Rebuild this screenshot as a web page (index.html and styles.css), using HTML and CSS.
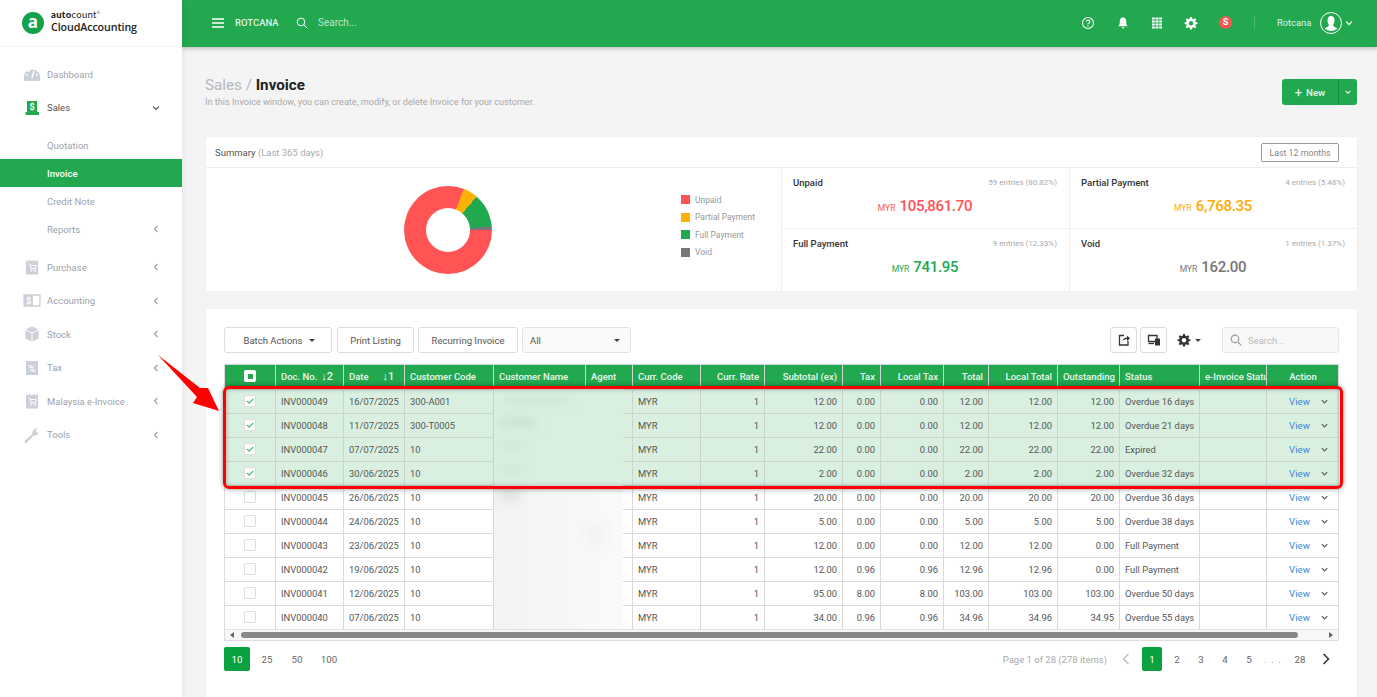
FILE: index.html
```html
<!DOCTYPE html>
<html lang="en">
<head>
<meta charset="utf-8">
<title>Sales / Invoice</title>
<link rel="stylesheet" href="styles.css">
</head>
<body>
<svg class="sprite" width="0" height="0" aria-hidden="true">
  <symbol id="down" viewBox="0 0 10 10"><path d="M2 3.5 5 6.5 8 3.5" fill="none" stroke="currentColor" stroke-width="1.3"/></symbol>
  <symbol id="left" viewBox="0 0 10 10"><path d="M6.5 2 3.5 5 6.5 8" fill="none" stroke="currentColor" stroke-width="1.2"/></symbol>
  <symbol id="tick" viewBox="0 0 12 12"><path d="M2.5 6.2 5 8.5 9.8 3.8" fill="none" stroke="#22a84f" stroke-width="1.3"/></symbol>
  <symbol id="cart" viewBox="0 0 18 18"><path d="M3 2 5 3.500 7 2 9 3.500 11 2 13 3.500 15 2V16.500H3Z" fill="currentColor"/><path d="M5.500 6H7L8 10.500H12.500L13 7.500H7.500" fill="none" stroke="#fff" stroke-width="1"/><circle cx="8.500" cy="12.500" r="1" fill="#fff"/><circle cx="12" cy="12.500" r="1" fill="#fff"/></symbol>
</svg>
<div class="app">
  <aside class="sidebar">
    <div class="brand">
      <span class="brand-mark">a</span>
      <div class="brand-text">
        <div class="brand-top"><b>auto</b>count<sup>®</sup></div>
        <div class="brand-name">CloudAccounting</div>
      </div>
    </div>
    <nav class="nav">
      <a class="nav-item"><svg class="nav-icon" viewBox="0 0 18 18"><path d="M1 14.500A8.200 8.200 0 1 1 17 14.500 1.500 1.500 0 0 1 15.500 16H2.500A1.500 1.500 0 0 1 1 14.500Z" fill="currentColor"/><path d="M9 13 11 6" stroke="#fff" stroke-width="1.500"/><circle cx="4" cy="10" r="1" fill="#fff"/><circle cx="6" cy="6" r="1" fill="#fff"/><circle cx="14" cy="10" r="1" fill="#fff"/></svg><span class="nav-label">Dashboard</span></a>
      <a class="nav-item nav-open"><svg class="nav-icon nav-icon-green" viewBox="0 0 18 18"><path d="M4 2H14V14H4Z" fill="currentColor"/><path d="M2.500 13H16V16H2.500Z" fill="currentColor"/><text x="9" y="11" class="icon-dollar">$</text></svg><span class="nav-label">Sales</span><svg class="nav-arrow"><use href="#down"/></svg></a>
      <div class="subnav">
        <a class="sub-item">Quotation</a>
        <a class="sub-item sub-active">Invoice</a>
        <a class="sub-item">Credit Note</a>
        <a class="sub-item">Reports<svg class="nav-arrow"><use href="#left"/></svg></a>
      </div>
      <a class="nav-item"><svg class="nav-icon"><use href="#cart"/></svg><span class="nav-label">Purchase</span><svg class="nav-arrow"><use href="#left"/></svg></a>
      <a class="nav-item"><svg class="nav-icon" viewBox="0 0 18 18"><path d="M1 3H17V14H1Z" fill="none" stroke="currentColor" stroke-width="1.300"/><path d="M1 3H10V14H1Z" fill="currentColor"/><text x="5.500" y="11.500" class="icon-dollar">$</text></svg><span class="nav-label">Accounting</span><svg class="nav-arrow"><use href="#left"/></svg></a>
      <a class="nav-item"><svg class="nav-icon" viewBox="0 0 18 18"><path d="M9 1.500 15.500 4.500 9 7.500 2.500 4.500Z" fill="currentColor"/><path d="M2.500 5.500 8.500 8.500V16.500L2.500 13.500Z" fill="currentColor"/><path d="M15.500 5.500 9.500 8.500V16.500L15.500 13.500Z" fill="currentColor"/></svg><span class="nav-label">Stock</span><svg class="nav-arrow"><use href="#left"/></svg></a>
      <a class="nav-item"><svg class="nav-icon" viewBox="0 0 18 18"><path d="M3 2H15V16H3Z" fill="currentColor"/><text x="9" y="12.500" class="icon-dollar">%</text></svg><span class="nav-label">Tax</span><svg class="nav-arrow"><use href="#left"/></svg></a>
      <a class="nav-item"><svg class="nav-icon"><use href="#cart"/></svg><span class="nav-label">Malaysia e-Invoice</span><svg class="nav-arrow"><use href="#left"/></svg></a>
      <a class="nav-item"><svg class="nav-icon" viewBox="0 0 18 18"><path d="M2 14.500 9.500 8A4.500 4.500 0 0 1 15 2.500L12.500 5 13.500 6.500 15.500 7A4.500 4.500 0 0 1 10.500 9.500L4 16.500A1.400 1.400 0 0 1 2 14.500Z" fill="currentColor"/></svg><span class="nav-label">Tools</span><svg class="nav-arrow"><use href="#left"/></svg></a>
    </nav>
  </aside>

  <div class="main">
    <header class="topbar">
      <svg class="top-menu" viewBox="0 0 14 12"><path d="M1 2H13M1 6H13M1 10H13" stroke="#fff" stroke-width="1.300"/></svg>
      <span class="top-org">ROTCANA</span>
      <svg class="top-search" viewBox="0 0 12 12"><circle cx="5" cy="5" r="3.800" fill="none" stroke="#fff" stroke-width="1"/><path d="M8 8 11.300 11.300" stroke="#fff" stroke-width="1"/></svg>
      <span class="top-placeholder">Search...</span>
      <div class="top-right">
        <svg class="top-icon top-help" viewBox="0 0 14 14"><circle cx="7" cy="7" r="5.500" fill="none" stroke="#fff" stroke-width="1.100"/><path d="M5.300 5.500A1.800 1.800 0 1 1 7 7.700V8.500" fill="none" stroke="#fff" stroke-width="1.100"/><circle cx="7" cy="10" r=".7" fill="#fff"/></svg>
        <svg class="top-icon" viewBox="0 0 14 14"><path d="M7 1.500C4.500 1.500 3.800 3.500 3.800 5.500 3.800 8 3.300 9.200 2.300 10.300H11.700C10.700 9.200 10.200 8 10.200 5.500 10.200 3.500 9.500 1.500 7 1.500Z" fill="#fff"/><path d="M5.700 11.300H8.300A1.300 1.300 0 0 1 5.700 11.300Z" fill="#fff"/></svg>
        <svg class="top-icon" viewBox="0 0 14 14"><path d="M2 2.500H12M2 5.500H12M2 8.500H12M2 11.500H12" stroke="#fff" stroke-width="2"/><path d="M5.200 1V13M8.800 1V13" stroke="#22a84f" stroke-width=".7"/></svg>
        <svg class="top-icon top-gear" viewBox="0 0 14 14"><path d="M6 1H8L8.300 2.700 9.600 3.200 11 2.200 12.300 3.600 11.300 5 11.800 6.200 13.500 6.500V8L11.800 8.300 11.300 9.600 12.300 11 11 12.300 9.600 11.300 8.300 11.800 8 13.500H6L5.700 11.800 4.400 11.300 3 12.300 1.700 11 2.700 9.600 2.200 8.300.5 8V6.500L2.200 6.200 2.700 5 1.700 3.600 3 2.200 4.400 3.200 5.700 2.700Z" fill="#fff"/><circle cx="7" cy="7.200" r="2.200" fill="#22a84f"/></svg>
        <span class="top-badge">S</span>
        <span class="top-divider"></span>
        <span class="top-user">Rotcana</span>
        <svg class="top-avatar" viewBox="0 0 22 22"><circle cx="11" cy="11" r="10.500" fill="#22a84f" stroke="#fff"/><path d="M11 4C8.500 4 7.500 6 7.500 8.500 7.500 10.500 8.500 12 9 13 9 14.500 6 15.500 4.500 16.500A10 10 0 0 0 17.500 16.500C16 15.500 13 14.500 13 13 13.500 12 14.500 10.500 14.500 8.500 14.500 6 13.500 4 11 4Z" fill="#fff"/></svg>
        <svg class="top-caret"><use href="#down"/></svg>
      </div>
    </header>

    <div class="content">
      <div class="page-head">
        <div>
          <h1 class="page-title"><span class="crumb">Sales / </span>Invoice</h1>
          <p class="page-sub">In this Invoice window, you can create, modify, or delete Invoice for your customer.</p>
        </div>
        <div class="new-group">
          <button class="new-btn"><span class="new-plus">+</span>New</button>
          <button class="new-drop"><svg class="new-caret"><use href="#down"/></svg></button>
        </div>
      </div>

      <section class="card summary">
        <div class="summary-head">
          <span class="summary-title">Summary <span class="muted">(Last 365 days)</span></span>
          <button class="range-btn">Last 12 months</button>
        </div>
        <div class="summary-body">
          <div class="chart-area">
            <div class="donut"></div>
            <ul class="legend">
              <li><i class="sw sw-red"></i>Unpaid</li>
              <li><i class="sw sw-amber"></i>Partial Payment</li>
              <li><i class="sw sw-green"></i>Full Payment</li>
              <li><i class="sw sw-gray"></i>Void</li>
            </ul>
          </div>
          <div class="stats">
            <div class="stat"><div class="stat-top"><b>Unpaid</b><span>59 entries (80.82%)</span></div><div class="stat-val val-red"><small>MYR</small>105,861.70</div></div>
            <div class="stat"><div class="stat-top"><b>Partial Payment</b><span>4 entries (5.48%)</span></div><div class="stat-val val-amber"><small>MYR</small>6,768.35</div></div>
            <div class="stat"><div class="stat-top"><b>Full Payment</b><span>9 entries (12.33%)</span></div><div class="stat-val val-green"><small>MYR</small>741.95</div></div>
            <div class="stat"><div class="stat-top"><b>Void</b><span>1 entries (1.37%)</span></div><div class="stat-val val-gray"><small>MYR</small>162.00</div></div>
          </div>
        </div>
      </section>

      <section class="card list">
        <div class="toolbar">
          <button class="btn btn-batch">Batch Actions<i class="tri"></i></button>
          <button class="btn btn-print">Print Listing</button>
          <button class="btn btn-rec">Recurring Invoice</button>
          <div class="select">All<i class="tri"></i></div>
          <div class="tool-right">
            <button class="btn btn-icon"><svg viewBox="0 0 14 14" class="tool-svg"><path d="M7 2.500H2.500V12H11V8" fill="none" stroke="#333" stroke-width="1.300"/><path d="M5.500 8C6 5.500 8 4.500 10 4.500V2.500L13 5.500 10 8V6.200C8 6.200 6.500 6.800 5.500 8Z" fill="#333"/></svg></button>
            <button class="btn btn-icon"><svg viewBox="0 0 14 14" class="tool-svg"><path d="M1.500 2.500H10V8.500H1.500Z" fill="none" stroke="#333" stroke-width="1.300"/><path d="M1.500 10.500H7" stroke="#333" stroke-width="1.300"/><path d="M8 5.500H13V12.500H8Z" fill="#333"/></svg></button>
            <div class="gear-menu"><svg viewBox="0 0 14 14" class="tool-svg"><path d="M6 1H8L8.300 2.700 9.600 3.200 11 2.200 12.300 3.600 11.300 5 11.800 6.200 13.500 6.500V8L11.800 8.300 11.300 9.600 12.300 11 11 12.300 9.600 11.300 8.300 11.800 8 13.500H6L5.700 11.800 4.400 11.300 3 12.300 1.700 11 2.700 9.600 2.200 8.300.5 8V6.500L2.200 6.200 2.700 5 1.700 3.600 3 2.200 4.400 3.200 5.700 2.700Z" fill="#333"/><circle cx="7" cy="7.200" r="2.200" fill="#fff"/></svg><i class="tri"></i></div>
            <div class="list-search"><svg viewBox="0 0 12 12" class="search-svg"><circle cx="5" cy="5" r="3.800" fill="none" stroke="#999" stroke-width="1.200"/><path d="M8 8 11.300 11.300" stroke="#999" stroke-width="1.200"/></svg>Search...</div>
          </div>
        </div>

        <div class="table-wrap">
          <table class="grid">
            <colgroup>
              <col class="c1"><col class="c2"><col class="c3"><col class="c4"><col class="c5"><col class="c6"><col class="c7"><col class="c8"><col class="c9"><col class="c10"><col class="c11"><col class="c12"><col class="c13"><col class="c14"><col class="c15"><col class="c16"><col class="c17">
            </colgroup>
            <thead>
              <tr>
                <th><span class="chk chk-head"></span></th>
                <th>Doc. No.<span class="sort sort-doc">↓2</span></th>
                <th>Date<span class="sort sort-date">↓1</span></th>
                <th>Customer Code</th><th>Customer Name</th><th>Agent</th><th>Curr. Code</th>
                <th>Curr. Rate</th><th>Subtotal (ex)</th><th>Tax</th><th>Local Tax</th><th>Total</th><th>Local Total</th><th>Outstanding</th>
                <th>Status</th><th>e-Invoice Status</th><th>Action</th>
              </tr>
            </thead>
            <tbody>
              <tr class="sel"><td><span class="chk"><svg><use href="#tick"/></svg></span></td><td>INV000049</td><td>16/07/2025</td><td>300-A001</td><td></td><td></td><td>MYR</td><td>1</td><td>12.00</td><td>0.00</td><td>0.00</td><td>12.00</td><td>12.00</td><td>12.00</td><td>Overdue 16 days</td><td></td><td><div class="act"><a>View</a><svg><use href="#down"/></svg></div></td></tr>
              <tr class="sel"><td><span class="chk"><svg><use href="#tick"/></svg></span></td><td>INV000048</td><td>11/07/2025</td><td>300-T0005</td><td></td><td></td><td>MYR</td><td>1</td><td>12.00</td><td>0.00</td><td>0.00</td><td>12.00</td><td>12.00</td><td>12.00</td><td>Overdue 21 days</td><td></td><td><div class="act"><a>View</a><svg><use href="#down"/></svg></div></td></tr>
              <tr class="sel"><td><span class="chk"><svg><use href="#tick"/></svg></span></td><td>INV000047</td><td>07/07/2025</td><td>10</td><td></td><td></td><td>MYR</td><td>1</td><td>22.00</td><td>0.00</td><td>0.00</td><td>22.00</td><td>22.00</td><td>22.00</td><td>Expired</td><td></td><td><div class="act"><a>View</a><svg><use href="#down"/></svg></div></td></tr>
              <tr class="sel"><td><span class="chk"><svg><use href="#tick"/></svg></span></td><td>INV000046</td><td>30/06/2025</td><td>10</td><td></td><td></td><td>MYR</td><td>1</td><td>2.00</td><td>0.00</td><td>0.00</td><td>2.00</td><td>2.00</td><td>2.00</td><td>Overdue 32 days</td><td></td><td><div class="act"><a>View</a><svg><use href="#down"/></svg></div></td></tr>
              <tr><td><span class="chk"></span></td><td>INV000045</td><td>26/06/2025</td><td>10</td><td></td><td></td><td>MYR</td><td>1</td><td>20.00</td><td>0.00</td><td>0.00</td><td>20.00</td><td>20.00</td><td>20.00</td><td>Overdue 36 days</td><td></td><td><div class="act"><a>View</a><svg><use href="#down"/></svg></div></td></tr>
              <tr><td><span class="chk"></span></td><td>INV000044</td><td>24/06/2025</td><td>10</td><td></td><td></td><td>MYR</td><td>1</td><td>5.00</td><td>0.00</td><td>0.00</td><td>5.00</td><td>5.00</td><td>5.00</td><td>Overdue 38 days</td><td></td><td><div class="act"><a>View</a><svg><use href="#down"/></svg></div></td></tr>
              <tr><td><span class="chk"></span></td><td>INV000043</td><td>23/06/2025</td><td>10</td><td></td><td></td><td>MYR</td><td>1</td><td>12.00</td><td>0.00</td><td>0.00</td><td>12.00</td><td>12.00</td><td>0.00</td><td>Full Payment</td><td></td><td><div class="act"><a>View</a><svg><use href="#down"/></svg></div></td></tr>
              <tr><td><span class="chk"></span></td><td>INV000042</td><td>19/06/2025</td><td>10</td><td></td><td></td><td>MYR</td><td>1</td><td>12.00</td><td>0.96</td><td>0.96</td><td>12.96</td><td>12.96</td><td>0.00</td><td>Full Payment</td><td></td><td><div class="act"><a>View</a><svg><use href="#down"/></svg></div></td></tr>
              <tr><td><span class="chk"></span></td><td>INV000041</td><td>12/06/2025</td><td>10</td><td></td><td></td><td>MYR</td><td>1</td><td>95.00</td><td>8.00</td><td>8.00</td><td>103.00</td><td>103.00</td><td>103.00</td><td>Overdue 50 days</td><td></td><td><div class="act"><a>View</a><svg><use href="#down"/></svg></div></td></tr>
              <tr><td><span class="chk"></span></td><td>INV000040</td><td>07/06/2025</td><td>10</td><td></td><td></td><td>MYR</td><td>1</td><td>34.00</td><td>0.96</td><td>0.96</td><td>34.96</td><td>34.96</td><td>34.95</td><td>Overdue 55 days</td><td></td><td><div class="act"><a>View</a><svg><use href="#down"/></svg></div></td></tr>
            </tbody>
          </table>
          <div class="smear smear-green"><i class="blob b1"></i><i class="blob b2"></i><i class="blob b3"></i><i class="blob b4"></i></div>
          <div class="smear smear-gray"><i class="blob b5"></i><i class="blob b6"></i></div>
          <div class="hscroll"><i class="sa sa-left"></i><div class="thumb"></div><i class="sa sa-right"></i></div>
        </div>

        <div class="pager-row">
          <div class="sizes"><span class="pg pg-on">10</span><span class="size">25</span><span class="size">50</span><span class="size">100</span></div>
          <div class="pager">
            <span class="pg-info">Page 1 of 28 (278 items)</span>
            <svg class="pg-arrow pg-prev" viewBox="0 0 10 14"><path d="M7.500 2 2.500 7 7.500 12" fill="none" stroke="currentColor" stroke-width="1.300"/></svg>
            <span class="pg pg-num">1</span><span class="pn">2</span><span class="pn">3</span><span class="pn">4</span><span class="pn">5</span><span class="pn pn-dots">. . .</span><span class="pn pn-last">28</span>
            <svg class="pg-arrow pg-next" viewBox="0 0 10 14"><path d="M2.500 2 7.500 7 2.500 12" fill="none" stroke="currentColor" stroke-width="1.500"/></svg>
          </div>
        </div>
      </section>
    </div>
  </div>
</div>
<div class="mark-box"></div>
<svg class="mark-arrow" viewBox="0 0 70 64"><polygon points="3,1 45,34 53,34 64,57 38,49 42,43" fill="#f00"/></svg>
</body>
</html>
```
FILE: styles.css
```css
* { box-sizing: border-box; }
html, body { margin: 0; height: 697px; overflow: hidden; }
body { font-family: Roboto, "Liberation Sans", sans-serif; color: #555; background: #f4f4f4; position: relative; }
button { font-family: inherit; cursor: pointer; }
.sprite { position: absolute; }
.app { display: flex; height: 697px; }

/* sidebar */
.sidebar { width: 182px; flex: none; background: #fff; box-shadow: 2px 0 6px rgba(0,0,0,.05); z-index: 1; }
.brand { height: 47px; display: flex; align-items: center; padding-left: 22px; gap: 7px; border-bottom: 1px solid #f5f5f5; }
.brand-mark { width: 22px; height: 22px; border-radius: 50%; background: #12a24a; color: #fff; font: 700 17px/20px "Open Sans", sans-serif; text-align: center; }
.brand-text { padding-bottom: 3px; }
.brand-top { font: 400 9.5px/11px Lato, sans-serif; color: #222; letter-spacing: .3px; }
.brand-top b { font-weight: 900; }
.brand-top sup { font-size: 4px; line-height: 0; }
.brand-name { font: 600 10.7px/14px "Open Sans", sans-serif; color: #222; letter-spacing: -.1px; }
.nav { padding-top: 10.5px; font-size: 9.5px; }
.nav-item { height: 33.5px; display: flex; align-items: center; padding-left: 23px; color: #9ea3aa; }
.nav-icon { width: 18px; height: 18px; flex: none; color: #cbd0d8; margin-right: 6px; }
.nav-icon-green { color: #22a84f; }
.icon-dollar { font: 700 9px Roboto, sans-serif; fill: #fff; text-anchor: middle; }
.nav-label { flex: 1; }
.nav-open { color: #555; }
.nav-arrow { width: 10px; height: 10px; color: #a0a0a0; margin-right: 21px; flex: none; }
.nav-open .nav-arrow { color: #666; }
.subnav { padding: 6.5px 0 7.5px; }
.sub-item { height: 28px; display: flex; align-items: center; padding-left: 47px; color: #9ea3aa; justify-content: space-between; }
.sub-active { background: #22a84f; color: #fff; font-weight: 500; }

/* main */
.main { flex: 1; min-width: 0; }
.topbar { height: 47px; background: #22a84f; color: #fff; display: flex; align-items: center; padding: 0 0 2px 29px; box-shadow: 0 2px 4px rgba(0,0,0,.2); position: relative; }
.top-menu { width: 14px; height: 12px; margin-right: 10px; }
.top-org { font-size: 9.5px; font-weight: 500; color: #dff3e6; width: 61px; }
.top-search { width: 12px; height: 12px; }
.top-placeholder { margin-left: 10px; font-size: 10px; color: #bfe6cc; }
.top-right { margin-left: auto; display: flex; align-items: center; padding-right: 24px; }
.top-icon { width: 14px; height: 14px; margin-right: 20px; }
.top-help { margin-right: 21px; }
.top-gear { margin-right: 21px; }
.top-badge { width: 13px; height: 13px; border-radius: 50%; background: #f5574f; color: #fff; font: 700 9px/13px Roboto, sans-serif; text-align: center; }
.top-divider { width: 1px; height: 12px; background: #4dbb73; margin: 0 22px; }
.top-user { font-size: 9.3px; color: #dff3e6; width: 43px; }
.top-avatar { width: 22px; height: 22px; }
.top-caret { width: 10px; height: 10px; color: #dff3e6; margin-left: 2px; margin-right: -1px; }

.content { padding: 0 20px 0 24px; }
.page-head { display: flex; justify-content: space-between; align-items: flex-start; padding-top: 29px; height: 90px; margin-left: -1px; }
.page-title { margin: 0; font-size: 15.2px; line-height: 19px; font-weight: 700; color: #222; }
.crumb { font-weight: 400; color: #b5b8bd; }
.page-sub { margin: 1px 0 0; font-size: 9.1px; line-height: 13px; color: #aaa; }
.new-group { display: flex; margin-top: 3px; }
.new-btn { width: 57px; height: 26px; background: #22a84f; color: #e8f7ed; border: 0; border-radius: 3px 0 0 3px; font-size: 9.7px; font-weight: 500; border-right: 1px solid #1a8a40; }
.new-plus { font-size: 13px; font-weight: 400; margin-right: 4px; vertical-align: -1px; }
.new-drop { width: 18px; height: 26px; background: #22a84f; border: 0; border-radius: 0 3px 3px 0; padding: 0; display: flex; align-items: center; justify-content: center; }
.new-caret { width: 8px; height: 8px; color: #e8f7ed; }

.card { background: #fff; box-shadow: 0 0 2px rgba(0,0,0,.06); }
.summary { height: 154px; border-radius: 2px; }
.summary-head { height: 31px; display: flex; align-items: center; justify-content: space-between; padding: 1px 18px 0 9px; border-bottom: 1px solid #eee; }
.summary-title { font-size: 9.5px; color: #555; }
.muted { color: #aaa; }
.range-btn { width: 78px; height: 19px; background: #fff; border: 1px solid #999; border-radius: 2px; font-size: 8.8px; color: #888; padding: 0; }
.summary-body { display: flex; height: 123px; }
.chart-area { width: 575px; display: flex; align-items: center; padding-left: 198px; }
.donut { width: 88px; height: 88px; border-radius: 50%; position: relative; background: conic-gradient(from 90deg, #ff5354 0 80.82%, #ffb005 80.82% 86.3%, #22a84f 86.3% 98.63%, #777 98.63% 100%); margin-top: 1px; }
.donut::after { content: ""; position: absolute; left: 22px; top: 22px; width: 44px; height: 44px; border-radius: 50%; background: #fff; }
.legend { list-style: none; margin: 0 0 7px 189px; padding: 0; font-size: 8.5px; color: #999; }
.legend li { height: 17.5px; display: flex; align-items: center; gap: 5px; }
.sw { width: 9px; height: 9px; display: block; }
.sw-red { background: #ff5354; } .sw-amber { background: #ffb005; } .sw-green { background: #22a84f; } .sw-gray { background: #777; }
.stats { flex: 1; display: grid; grid-template-columns: 287px 1fr; grid-template-rows: 61px 62px; border-left: 1px solid #eee; }
.stat { padding: 9px 12px 0 11px; border-bottom: 1px solid #f0f0f0; }
.stat:nth-child(even) { border-left: 1px solid #eee; }
.stat:nth-child(n+3) { border-bottom: 0; }
.stat-top { display: flex; justify-content: space-between; align-items: center; font-size: 9.5px; line-height: 11px; }
.stat-top b { font-weight: 500; color: #333; }
.stat-top span { font-size: 8px; color: #aaa; }
.stat-val { text-align: center; font-size: 15px; letter-spacing: -.3px; line-height: 19px; font-weight: 500; margin-top: 9px; }
.stat-val small { font-size: 8.5px; letter-spacing: 0; font-weight: 400; margin-right: 4px; }
.val-red { color: #ff5354; } .val-amber { color: #ffab00; } .val-green { color: #22a84f; } .val-gray { color: #777; }

.list { margin-top: 18px; height: 400px; padding: 18px 18px 0; border-radius: 2px; }
.toolbar { display: flex; align-items: center; height: 26px; margin-bottom: 11px; font-size: 9.5px; }
.btn { height: 26px; background: #fff; border: 1px solid #ddd; border-radius: 3px; font-size: 9.5px; color: #555; padding: 0; display: flex; align-items: center; justify-content: center; }
.btn-batch { width: 108px; margin-right: 5px; padding-left: 3px; }
.btn-print { width: 77px; margin-right: 4px; }
.btn-rec { width: 100px; margin-right: 4px; }
.tri { width: 0; height: 0; border: 3px solid transparent; border-top: 3px solid #444; border-bottom: 0; display: block; }
.btn-batch .tri { margin-left: 7px; }
.select { width: 109px; height: 26px; background: #fafafa; border: 1px solid #e2e2e2; border-radius: 3px; display: flex; align-items: center; justify-content: space-between; padding: 0 10px 0 7px; color: #555; }
.tool-right { margin-left: auto; display: flex; align-items: center; }
.btn-icon { width: 27px; margin-right: 3px; }
.tool-svg { width: 14px; height: 14px; }
.gear-menu { display: flex; align-items: center; gap: 4px; margin: 0 21px 0 7px; }
.list-search { width: 117px; height: 26px; background: #f8f8f8; border: 1px solid #e6e6e6; border-radius: 3px; display: flex; align-items: center; padding-left: 7px; gap: 6px; color: #bbb; font-size: 9.5px; }
.search-svg { width: 12px; height: 12px; }

.table-wrap { position: relative; width: 1115px; height: 277px; overflow: hidden; border-left: 1px solid #ddd; border-right: 1px solid #ddd; border-bottom: 1px solid #ddd; }
.grid { width: 1115px; margin-left: -1px; table-layout: fixed; border-collapse: collapse; font-size: 9.4px; }
.c1 { width: 51px; } .c2 { width: 68px; } .c3 { width: 61px; } .c4 { width: 89px; } .c5 { width: 92px; } .c6 { width: 47px; } .c7 { width: 68px; } .c8 { width: 64px; } .c9 { width: 78px; } .c10 { width: 38px; } .c11 { width: 63px; } .c12 { width: 45px; } .c13 { width: 69px; } .c14 { width: 62px; } .c15 { width: 80px; } .c16 { width: 67px; } .c17 { width: 73px; }
.grid th { height: 25px; background: #22a84f; color: #eaf7ef; font-weight: 500; font-size: 9.5px; text-align: left; padding: 0 5px 2px; border: 1px solid #cfd6d1; white-space: nowrap; overflow: hidden; }
.grid td { height: 24px; padding: 0 5px 1px; border: 1px solid #d9d9d9; color: #555; white-space: nowrap; overflow: hidden; }
.grid th:first-child, .grid td:first-child, .grid th:last-child { text-align: center; }
.grid th:nth-child(n+8):nth-child(-n+14), .grid td:nth-child(n+8):nth-child(-n+14) { text-align: right; }
.sel td { background: #d9f0e1; border-color: #c8d6cc; }
.chk { display: inline-block; width: 12px; height: 12px; background: #fff; border: 1px solid #ddd; border-radius: 2px; vertical-align: middle; }
.chk svg { display: block; width: 10px; height: 10px; }
.chk-head { border: 0; position: relative; }
.chk-head::after { content: ""; position: absolute; left: 3.500px; top: 3.500px; width: 5px; height: 5px; background: #22a84f; }
.sort { font-size: 11px; }
.sort-doc { margin-left: 4px; }
.sort-date { margin-left: 14px; }
.act { display: flex; align-items: center; justify-content: flex-start; padding: 1px 0 0 17px; }
.act a { color: #3d87d6; width: 31px; font-size: 9.7px; }
.act svg { width: 9px; height: 9px; color: #555; }

.smear { position: absolute; left: 269px; width: 129px; overflow: hidden; }
.smear-green { top: 25px; height: 96px; background: #d9f0e1; }
.smear-gray { top: 121px; height: 144px; background: linear-gradient(90deg, #f3f3f3, #f6f6f6 40%, #fafafa); }
.blob { position: absolute; display: block; filter: blur(5px); }
.b1 { left: 12px; top: 8px; width: 62px; height: 6px; background: #cbe2d3; }
.b2 { left: 6px; top: 30px; width: 36px; height: 7px; background: #c6dece; }
.b3 { left: 6px; top: 54px; width: 24px; height: 6px; background: #cde3d5; }
.b4 { left: 6px; top: 78px; width: 24px; height: 6px; background: #cde3d5; }
.b5 { left: 6px; top: 2px; width: 20px; height: 14px; background: #e2e2e2; }
.b6 { left: 90px; top: 40px; width: 24px; height: 20px; background: #f3f3f3; }

.hscroll { position: absolute; left: 0; right: 0; bottom: 0; height: 11px; background: #f7f7f7; border-top: 1px solid #e2e2e2; }
.thumb { position: absolute; left: 16px; width: 1057px; top: 2px; height: 6px; border-radius: 3px; background: #888; }
.sa { position: absolute; top: 2px; width: 0; height: 0; border: 3px solid transparent; }
.sa-left { left: 5px; border-right: 4px solid #666; border-left: 0; }
.sa-right { right: 5px; border-left: 4px solid #666; border-right: 0; }

.pager-row { display: flex; justify-content: space-between; align-items: center; height: 24px; margin-top: 6px; font-size: 9.7px; }
.sizes { display: flex; align-items: center; }
.pg { display: inline-flex; align-items: center; justify-content: center; height: 24px; background: #0aa140; color: #fff; border-radius: 2px; }
.pg-on { width: 26px; }
.pg-num { width: 20px; }
.size { width: 30px; text-align: center; color: #666; }
.size:nth-child(2) { margin-left: 2px; }
.size:last-child { margin-left: 2px; }
.pager { display: flex; align-items: center; }
.pg-info { color: #aaa; font-size: 9.5px; margin-right: 14px; }
.pg-arrow { width: 10px; height: 14px; }
.pg-prev { color: #bbb; margin-right: 11px; }
.pg-next { color: #333; margin-left: 9px; margin-right: 8px; }
.pn { width: 24px; text-align: center; color: #666; }
.pn:nth-of-type(3) { margin-left: 3px; }
.pn-dots { color: #999; letter-spacing: 1px; }
.pn-last { margin-left: 3px; }

/* annotation on top of the screenshot */
.mark-box { position: absolute; left: 223px; top: 386px; width: 1120px; height: 103px; border: 3px solid #f00; border-radius: 6px; box-shadow: 0 0 5px rgba(0,0,0,.45), inset 0 0 5px rgba(0,0,0,.3); z-index: 3; pointer-events: none; }
.mark-arrow { position: absolute; left: 155px; top: 354px; width: 70px; height: 64px; z-index: 3; }
```
